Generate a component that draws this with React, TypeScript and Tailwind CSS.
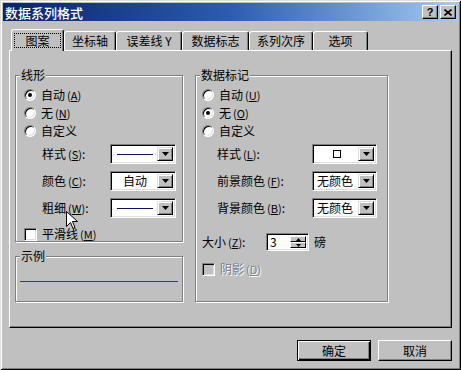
import type { ReactNode } from "react";

// ============================================================================
// Win98-style bits
// ============================================================================

function Radio({ checked = false }: { checked?: boolean }) {
    return (
        <span className="relative w-[12px] h-[12px] rounded-full bg-white border border-t-[#808080] border-l-[#808080] border-r-white border-b-white shadow-[inset_1px_1px_0_#000,inset_-1px_-1px_0_#dfdfdf] flex items-center justify-center shrink-0">
            {checked && <span className="w-[4px] h-[4px] rounded-full bg-black" />}
        </span>
    );
}

function CheckBox({ disabled = false }: { disabled?: boolean }) {
    return (
        <span
            className={`w-[13px] h-[13px] border border-t-[#808080] border-l-[#808080] border-r-white border-b-white shadow-[inset_1px_1px_0_#000,inset_-1px_-1px_0_#dfdfdf] shrink-0 ${
                disabled ? "bg-[#c0c0c0]" : "bg-white"
            }`}
        />
    );
}

function DropButton() {
    return (
        <span className="w-[16px] h-full bg-[#c0c0c0] border border-t-[#dfdfdf] border-l-[#dfdfdf] border-r-black border-b-black shadow-[inset_1px_1px_0_#fff,inset_-1px_-1px_0_#808080] flex items-center justify-center shrink-0">
            <svg width="7" height="4" viewBox="0 0 7 4">
                <path d="M0 0h7L3.5 4z" fill="#000" />
            </svg>
        </span>
    );
}

function Combo({ width, children }: { width: string; children?: ReactNode }) {
    return (
        <div
            className={`${width} h-[20px] bg-white border border-t-[#808080] border-l-[#808080] border-r-white border-b-white shadow-[inset_1px_1px_0_#000,inset_-1px_-1px_0_#dfdfdf] p-[2px] flex items-stretch`}
        >
            <div className="flex-1 flex items-center min-w-0">{children}</div>
            <DropButton />
        </div>
    );
}

function Key({ k }: { k: string }) {
    return (
        <span className="ml-[2px] text-[11px]">
            (<span className="underline">{k}</span>)
        </span>
    );
}

function GroupBox({ label, className, children }: { label: string; className: string; children?: ReactNode }) {
    return (
        <div className={`relative border border-[#808080] shadow-[1px_1px_0_#fff,inset_1px_1px_0_#fff] ${className}`}>
            <span className="absolute -top-[8px] left-[4px] px-[1px] bg-[#c0c0c0] leading-[14px]">{label}</span>
            {children}
        </div>
    );
}

function RadioRow({ checked, children }: { checked?: boolean; children: ReactNode }) {
    return (
        <div className="h-[18px] flex items-center gap-[5px]">
            <Radio checked={checked} />
            <span>{children}</span>
        </div>
    );
}

function LineSample() {
    return <span className="mx-[4px] flex-1 h-px bg-[#101060]" />;
}

// ============================================================================
// Dialog
// ============================================================================

const tabs = [
    { label: "坐标轴", w: "w-[52px]" },
    { label: "误差线 Y", w: "w-[66px]" },
    { label: "数据标志", w: "w-[67px]" },
    { label: "系列次序", w: "w-[64px]" },
    { label: "选项", w: "w-[55px]" },
];

export default function App() {
    return (
        <div className="relative w-[461px] h-[370px] bg-[#c0c0c0] p-[3px] shadow-[inset_1px_1px_0_#dfdfdf,inset_-1px_-1px_0_#000,inset_2px_2px_0_#fff,inset_-2px_-2px_0_#808080] font-['Noto_Sans_CJK_SC','Noto_Sans',sans-serif] text-[12px] text-black overflow-hidden">
            {/* Title bar */}
            <div className="h-[18px] bg-gradient-to-r from-[#0a246a] via-[#2c5cb0] to-[#a6caf0] flex items-center justify-between pl-[2px] pr-[2px]">
                <span className="text-white text-[13px] leading-none font-medium">数据系列格式</span>
                <div className="flex items-center gap-[2px]">
                    <span className="w-[16px] h-[14px] bg-[#c0c0c0] border border-t-white border-l-white border-r-black border-b-black shadow-[inset_-1px_-1px_0_#808080] flex items-center justify-center text-[11px] font-bold leading-none font-['Liberation_Sans',sans-serif]">
                        ?
                    </span>
                    <span className="w-[16px] h-[14px] bg-[#c0c0c0] border border-t-white border-l-white border-r-black border-b-black shadow-[inset_-1px_-1px_0_#808080] flex items-center justify-center">
                        <svg width="8" height="7" viewBox="0 0 8 7">
                            <path d="M0.5 0.5L7.5 6.5M7.5 0.5L0.5 6.5" stroke="#000" strokeWidth="1.6" />
                        </svg>
                    </span>
                </div>
            </div>

            {/* Tabs */}
            <div className="relative z-10 mt-[8px] ml-[8px] h-[21px] flex items-start">
                <div className="w-[53px] h-[22px] bg-[#c0c0c0] border-t border-l border-r border-t-white border-l-white border-r-black rounded-t-[3px] shadow-[inset_-1px_0_0_#808080] flex items-start justify-center pt-[3px]">
                    <span className="h-[15px] px-[10px] border border-dotted border-black flex items-center leading-none">图案</span>
                </div>
                {tabs.map((t) => (
                    <div
                        key={t.label}
                        className={`${t.w} mt-[2px] h-[19px] border-t border-l border-r border-t-white border-l-white border-r-black rounded-t-[3px] shadow-[inset_-1px_0_0_#808080] flex items-center justify-center leading-none`}
                    >
                        {t.label}
                    </div>
                ))}
            </div>

            {/* Tab panel */}
            <div className="ml-[6px] w-[443px] h-[278px] border border-t-white border-l-white border-r-black border-b-black shadow-[inset_-1px_-1px_0_#808080] pt-[24px] pl-[5px] flex gap-[12px]">
                {/* Left column */}
                <div className="flex flex-col gap-[14px]">
                    <GroupBox label="线形" className="w-[168px] h-[167px]">
                        <div className="pt-[10px] pl-[8px] flex flex-col">
                            <RadioRow checked>
                                自动<Key k="A" />
                            </RadioRow>
                            <RadioRow>
                                无<Key k="N" />
                            </RadioRow>
                            <RadioRow>自定义</RadioRow>
                            <div className="mt-[4px] pl-[18px] flex flex-col gap-[7px]">
                                <div className="flex items-center">
                                    <span className="w-[68px]">
                                        样式<Key k="S" />:
                                    </span>
                                    <Combo width="w-[66px]">
                                        <LineSample />
                                    </Combo>
                                </div>
                                <div className="flex items-center">
                                    <span className="w-[68px]">
                                        颜色<Key k="C" />:
                                    </span>
                                    <Combo width="w-[66px]">
                                        <span className="flex-1 text-center leading-none">自动</span>
                                    </Combo>
                                </div>
                                <div className="flex items-center">
                                    <span className="w-[68px]">
                                        粗细<Key k="W" />:
                                    </span>
                                    <Combo width="w-[66px]">
                                        <LineSample />
                                    </Combo>
                                </div>
                            </div>
                            <div className="mt-[7px] h-[18px] flex items-center gap-[5px]">
                                <CheckBox />
                                <span>
                                    平滑线<Key k="M" />
                                </span>
                            </div>
                        </div>
                    </GroupBox>
                    <GroupBox label="示例" className="w-[168px] h-[46px]">
                        <div className="pt-[24px] px-[4px]">
                            <div className="h-px bg-[#2a2ad8]" />
                        </div>
                    </GroupBox>
                </div>

                {/* Right column */}
                <GroupBox label="数据标记" className="w-[193px] h-[227px]">
                    <div className="pt-[10px] pl-[6px] flex flex-col">
                        <RadioRow>
                            自动<Key k="U" />
                        </RadioRow>
                        <RadioRow checked>
                            无<Key k="O" />
                        </RadioRow>
                        <RadioRow>自定义</RadioRow>
                        <div className="mt-[4px] pl-[15px] flex flex-col gap-[7px]">
                            <div className="flex items-center">
                                <span className="w-[95px]">
                                    样式<Key k="L" />:
                                </span>
                                <Combo width="w-[65px]">
                                    <span className="flex-1 flex justify-center">
                                        <span className="w-[8px] h-[8px] border border-black" />
                                    </span>
                                </Combo>
                            </div>
                            <div className="flex items-center">
                                <span className="w-[95px]">
                                    前景颜色<Key k="F" />:
                                </span>
                                <Combo width="w-[65px]">
                                    <span className="pl-[2px] leading-none">无颜色</span>
                                </Combo>
                            </div>
                            <div className="flex items-center">
                                <span className="w-[95px]">
                                    背景颜色<Key k="B" />:
                                </span>
                                <Combo width="w-[65px]">
                                    <span className="pl-[2px] leading-none">无颜色</span>
                                </Combo>
                            </div>
                        </div>
                        <div className="mt-[15px] h-[18px] flex items-center">
                            <span className="w-[64px]">
                                大小<Key k="Z" />:
                            </span>
                            <div className="w-[43px] h-[18px] bg-white border border-t-[#808080] border-l-[#808080] border-r-white border-b-white shadow-[inset_1px_1px_0_#000,inset_-1px_-1px_0_#dfdfdf] p-[2px] flex items-stretch">
                                <span className="flex-1 pl-[1px] leading-[12px]">3</span>
                                <span className="w-[16px] flex flex-col">
                                    <span className="flex-1 bg-[#c0c0c0] border border-t-white border-l-white border-r-black border-b-black flex items-center justify-center">
                                        <svg width="5" height="3" viewBox="0 0 5 3">
                                            <path d="M2.5 0L5 3H0z" fill="#000" />
                                        </svg>
                                    </span>
                                    <span className="flex-1 bg-[#c0c0c0] border border-t-white border-l-white border-r-black border-b-black flex items-center justify-center">
                                        <svg width="5" height="3" viewBox="0 0 5 3">
                                            <path d="M0 0h5L2.5 3z" fill="#000" />
                                        </svg>
                                    </span>
                                </span>
                            </div>
                            <span className="ml-[5px]">磅</span>
                        </div>
                        <div className="mt-[9px] h-[18px] flex items-center gap-[5px]">
                            <CheckBox disabled />
                            <span className="text-[#808080] [text-shadow:1px_1px_0_#fff]">
                                阴影<Key k="D" />
                            </span>
                        </div>
                    </div>
                </GroupBox>
            </div>

            {/* Buttons */}
            <div className="mt-[12px] pr-[6px] flex justify-end gap-[7px]">
                <button className="w-[74px] h-[21px] bg-[#c0c0c0] border border-black shadow-[inset_1px_1px_0_#fff,inset_-1px_-1px_0_#000,inset_-2px_-2px_0_#808080] leading-none">
                    确定
                </button>
                <button className="w-[74px] h-[21px] bg-[#c0c0c0] border border-t-white border-l-white border-r-black border-b-black shadow-[inset_-1px_-1px_0_#808080] leading-none">
                    取消
                </button>
            </div>

            {/* Mouse pointer */}
            <svg className="absolute left-[66px] top-[211px]" width="12" height="19" viewBox="0 0 12 19">
                <path d="M0.5 0.5V15.5L4.5 11.5L7 17.5L9 16.5L6.5 10.5H11.5Z" fill="#fff" stroke="#000" strokeWidth="1" />
            </svg>
        </div>
    );
}
